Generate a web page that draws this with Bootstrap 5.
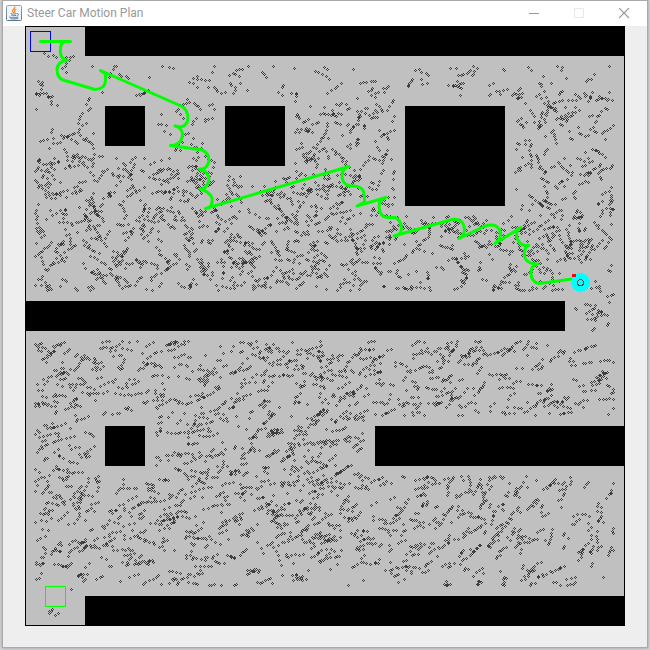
<!DOCTYPE html>
<html lang="en">
<head>
<meta charset="utf-8">
<meta name="viewport" content="width=device-width, initial-scale=1">
<title>Steer Car Motion Plan</title>
<link rel="stylesheet" href="https://cdn.jsdelivr.net/npm/bootstrap@5.3.0/dist/css/bootstrap.min.css">
<style>
body { background: #d4d4d8; font-family: "Noto Sans", sans-serif; }
.app-window { background: #eee; border: 1px solid #aaa; margin: 0 2px 2px 2px; min-height: 648px; box-shadow: 0 0 3px #999; }
.title-bar { background: #fff; height: 25px; padding: 0 0 1px 3px; }
.title-text { font-family: Roboto, "Noto Sans", sans-serif; font-size: 12px; line-height: 24px; color: #999; margin-left: 5px; }
.win-btn { display: flex; align-items: center; justify-content: center; width: 45px; height: 24px; color: #999; background: none; border: 0; padding: 0; }
.win-btn:disabled { color: #e8e8e8; }
.plan-area { padding: 0 22px 20px 22px; }
.plan-area svg { width: 100%; height: auto; display: block; }
</style>
<script src="https://cdn.jsdelivr.net/npm/bootstrap@5.3.0/dist/js/bootstrap.bundle.min.js"></script>
</head>
<body>
<div class="app-window">
  <header class="title-bar d-flex align-items-center">
    <svg width="16" height="16" viewBox="0 0 16 16" aria-hidden="true">
      <defs><linearGradient id="tile" x2="0" y2="1"><stop stop-color="#8fa6b8"/><stop offset="1" stop-color="#56778f"/></linearGradient></defs>
      <rect x=".5" y=".5" width="15" height="15" rx="1" fill="#f1f4f6" stroke="url(#tile)"/>
      <path d="M8.800 1.800C9.500 3.800 5.800 4.400 6.400 6.100c.3.800 1.100 1.200 1.300 2M10.300 4.200C8.500 5 8.200 5.700 8.800 6.500c.4.600.3 1.100-.3 1.600" fill="none" stroke="#ec8b38" stroke-width="1.300"/>
      <path d="M4.800 8.600c1.600.7 4.200.7 5.700 0M5.200 10.300c1.500.6 3.600.6 5 0M11 8.700c2-.4 2 1.700-.2 2.300M3.600 11.500c-1.700 1.200 5.700 1.800 8.400.5M4.500 13.700c3 .5 6.300.3 8-.6" fill="none" stroke="#5982a4" stroke-width="1"/>
    </svg>
    <span class="title-text flex-grow-1">Steer Car Motion Plan</span>
    <button class="win-btn" aria-label="Minimize"><svg width="11" height="11" viewBox="0 0 11 11"><path d="M0 5.500h10" stroke="currentColor"/></svg></button>
    <button class="win-btn" aria-label="Maximize" disabled><svg width="11" height="11" viewBox="0 0 11 11"><path d="M.5.5h9v9h-9z" fill="none" stroke="currentColor"/></svg></button>
    <button class="win-btn" aria-label="Close"><svg width="11" height="11" viewBox="0 0 11 11"><path d="M0 0l10 10M10 0L0 10" stroke="currentColor" stroke-width="1.200"/></svg></button>
  </header>
  <main class="plan-area">
    <svg viewBox="0 0 600 600" shape-rendering="crispEdges" role="img" aria-label="Motion plan map">
      <rect width="600" height="600" fill="#000"/>
      <rect x="1" y="1" width="598" height="598" fill="#c0c0c0"/>
      <path id="samples" fill="#404040"/>
      <g id="obstacles"></g>
      <rect x="5.500" y="5.500" width="20" height="20" fill="none" stroke="#00f"/>
      <rect x="20.500" y="560.500" width="20" height="20" fill="none" stroke="#0f0"/>
      <g fill="none" stroke="#0f0" stroke-width="3" stroke-linecap="round" stroke-linejoin="round" shape-rendering="auto">
        <path d="M15.500 15.500H45.500M40 15.500C36 17 35 22 35.500 27Q36 33 42 34.500Q33 35 32 43Q32 52 38 54L70 63.500Q80 63 80.500 55V48L75.500 44.500L156 80Q163 83 163 93Q162 100 155 101L150 100Q156 101 157.500 107Q158 116 150 119L145.500 119.500L177 124Q184 127 184 134Q183 141 178 143H174.500Q183 145 184 153Q183 161 177 163H175Q184 165 187 172Q188 179 184 182L180.500 182.500L324 140.500Q317 142 317 150Q317 158 325 160H330Q339 161 339.500 170V176L332 180L361 171.500Q354 173 354 181Q355 191 362 191.500H370Q376 193 376.500 203Q376 209 369 210L427 193.500Q439 192 439.500 204Q439 210 434 212.500L460 200Q475 196 475.500 209Q475 214 470 217.500L496 201.500Q491 204 491.500 210Q493 218 500 219.500H504Q499 220 499.500 230Q500 236 509 238H513Q506 238 506 247Q506 256 514 257.500L547 253"/>
      </g>
      <g>
        <circle cx="555.500" cy="256.500" r="9.500" fill="#0ff"/>
        <circle cx="555.500" cy="256.500" r="3" fill="none" stroke="#733"/>
        <rect x="547" y="248" width="4" height="3" fill="#f00"/>
      </g>
    </svg>
  </main>
</div>
<script>
// Obstacles as x, y, width, height in map units
const blocks = [[60,0,540,30],[80,80,40,40],[200,80,60,60],[380,80,100,100],[0,275,540,30],[80,400,40,40],[350,400,250,40],[60,570,540,30]];
document.getElementById('obstacles').innerHTML = blocks.map(([x,y,w,h]) => `<rect x="${x}" y="${y}" width="${w}" height="${h}"/>`).join('');

let seed = 7321;
const rnd = () => (seed = (seed * 16807) % 2147483647) / 2147483647;
const free = (x, y) => x >= 10 && y >= 15 && x <= 588 && y <= 589 &&
  blocks.every(([bx,by,w,h]) => x < bx - 10 || x > bx + w + 9 || y < by - 10 || y > by + h + 9);
// Share of candidate samples kept in each part of the map
function density(x, y) {
  if (y < 65) return .4;
  if (y < 120 && x < 260) return .45;
  if (x > 540 && y > 240 && y < 320) return .35;
  if (y > 540) return .55;
  if (y > 300 && y < 400 && x > 350) return .65;
  if (y > 440 && x > 500) return .5;
  return .9;
}
let d = '';
for (let n = 0; n < 4900; n++) {
  let x = rnd() * 600, y = rnd() * 600;
  if (rnd() > density(x, y)) continue;
  let angle = y > 300 ? (x > 420 && y > 440 ? -.8 : -.3) + (rnd() - .5) * 1.200 : (rnd() - .5) * 2.600;
  const length = 1 + Math.floor(rnd() * rnd() * 7);
  for (let k = 0; k < length; k++) {
    const px = Math.round(x), py = Math.round(y);
    if (free(px, py)) {
      d += `M${px} ${py-1}h1v1h-1zM${px-1} ${py}h1v1h-1zM${px+1} ${py}h1v1h-1zM${px} ${py+1}h1v1h-1z`;
    }
    const step = 2 + rnd() * 3;
    x += Math.cos(angle) * step;
    y += Math.sin(angle) * step;
    angle += (rnd() - .5) * .8;
  }
}
document.getElementById('samples').setAttribute('d', d);
</script>
</body>
</html>
